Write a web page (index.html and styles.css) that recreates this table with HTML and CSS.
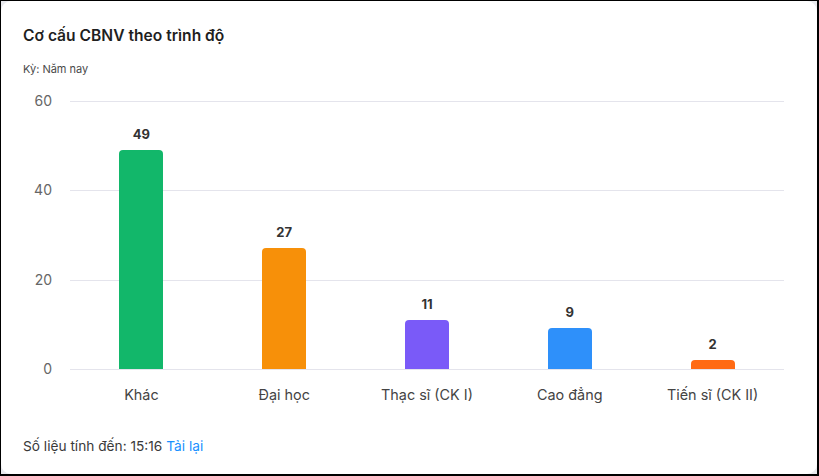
FILE: index.html
```html
<!DOCTYPE html>
<html lang="vi">
<head>
<meta charset="utf-8">
<title>Cơ cấu CBNV theo trình độ</title>
<link rel="stylesheet" href="styles.css">
</head>
<body>
<div class="frame">
  <div class="card">
    <h2 class="title">Cơ cấu CBNV theo trình độ</h2>
    <div class="period">Kỳ: Năm nay</div>
    <div class="chart">
      <div class="plot">
        <div class="grid" style="top:0%"><span class="ylabel">60</span></div>
        <div class="grid" style="top:33.333%"><span class="ylabel">40</span></div>
        <div class="grid" style="top:66.667%"><span class="ylabel">20</span></div>
        <div class="grid" style="top:100%"><span class="ylabel">0</span></div>
        <div class="bars">
          <div class="col"><span class="val">49</span><div class="bar green" style="height:219px"></div></div>
          <div class="col"><span class="val">27</span><div class="bar orange" style="height:121px"></div></div>
          <div class="col"><span class="val">11</span><div class="bar purple" style="height:49px"></div></div>
          <div class="col"><span class="val">9</span><div class="bar blue" style="height:41px"></div></div>
          <div class="col"><span class="val">2</span><div class="bar red" style="height:9px"></div></div>
        </div>
      </div>
      <div class="xlabels">
        <span>Khác</span>
        <span>Đại học</span>
        <span>Thạc sĩ (CK I)</span>
        <span>Cao đẳng</span>
        <span>Tiến sĩ (CK II)</span>
      </div>
    </div>
    <div class="footer">Số liệu tính đến: 15:16 <a href="#" class="reload">Tải lại</a></div>
  </div>
</div>
</body>
</html>
```
FILE: styles.css
```css
* { box-sizing: border-box; }
html, body { margin: 0; padding: 0; }
body {
  background: #000;
  font-family: Inter, "Noto Sans", "Liberation Sans", sans-serif;
  width: 819px;
  height: 476px;
  overflow: hidden;
}
.frame {
  margin: 1px 2px 2px 1px;
  height: 473px;
  background: #e9eaee;
}
.card {
  background: #fff;
  border-radius: 10px;
  height: 100%;
  padding: 25px 22px 0 22px;
  display: flex;
  flex-direction: column;
}
.title {
  margin: 0;
  font-size: 15.6px;
  line-height: 20px;
  font-weight: 600;
  color: #1f1f1f;
}
.period {
  margin-top: 15px;
  font-size: 11px;
  line-height: 16px;
  color: #4a4a4a;
}
.chart {
  margin-top: 24px;
  padding-left: 47px;
  padding-right: 11px;
}
.plot {
  position: relative;
  height: 268px;
}
.grid {
  position: absolute;
  left: 0;
  right: 0;
  height: 1px;
  background: #e4e4ec;
}
.ylabel {
  position: absolute;
  right: calc(100% + 18px);
  top: -10px;
  font-size: 14px;
  line-height: 20px;
  color: #666;
  text-align: right;
}
.bars {
  position: absolute;
  inset: 0;
  display: flex;
  align-items: flex-end;
}
.col {
  flex: 1;
  display: flex;
  flex-direction: column;
  align-items: center;
  justify-content: flex-end;
}
.val {
  font-size: 13px;
  line-height: 16px;
  font-weight: 700;
  color: #333;
  margin-bottom: 8px;
}
.bar {
  width: 44px;
  border-radius: 4px 4px 0 0;
}
.green { background: #12b76a; }
.orange { background: #f79009; }
.purple { background: #7a5af8; }
.blue { background: #2e90fa; }
.red { background: #ff6a14; }
.xlabels {
  display: flex;
  margin-top: 16px;
}
.xlabels span {
  flex: 1;
  text-align: center;
  font-size: 14.4px;
  line-height: 20px;
  color: #444;
}
.footer {
  margin-top: 32px;
  font-size: 13.7px;
  line-height: 18px;
  color: #3a3a3a;
}
.reload {
  color: #1890ff;
  text-decoration: none;
}
```
